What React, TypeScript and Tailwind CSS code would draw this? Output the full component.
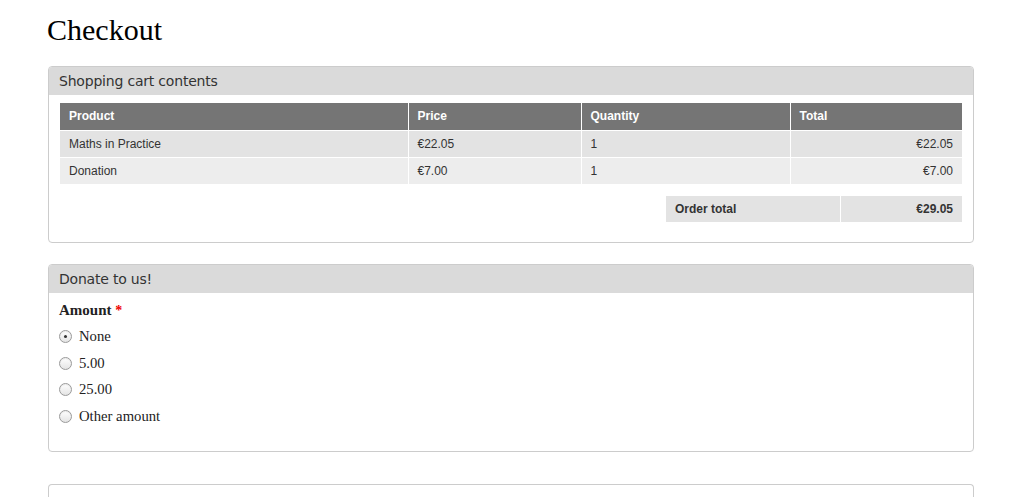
import React from "react";

const rows = [
  { product: "Maths in Practice", price: "€22.05", qty: "1", total: "€22.05" },
  { product: "Donation", price: "€7.00", qty: "1", total: "€7.00" },
];

const amounts = ["None", "5.00", "25.00", "Other amount"];

function Radio({ checked }: { checked?: boolean }) {
  return (
    <span className="relative inline-block w-[13px] h-[13px] rounded-full border border-[#9a9a9a] bg-gradient-to-b from-[#ffffff] to-[#e4e4e4] shadow-[inset_0_1px_1px_rgba(0,0,0,0.08)]">
      {checked && (
        <span className="absolute left-[4px] top-[4px] w-[3px] h-[3px] rounded-full bg-[#333]" />
      )}
    </span>
  );
}

function Panel({ title, children }: { title: string; children?: React.ReactNode }) {
  return (
    <section className="border border-[#cccccc] rounded-[4px] overflow-hidden bg-white">
      <div className="h-[28px] bg-[#dadada] px-[10px] flex items-center text-[14px] text-[#333] font-['DejaVu_Sans',sans-serif] tracking-[-0.2px]">
        {title}
      </div>
      {children}
    </section>
  );
}

export default function App() {
  return (
    <div className="h-[497px] overflow-hidden bg-white pl-[48px] pr-[42px] pt-[12px] font-['Liberation_Sans',Arial,sans-serif]">
      <h1 className="font-['Liberation_Serif',Georgia,serif] text-[30px] leading-[36px] text-black ml-[-1px] mb-[18px]">
        Checkout
      </h1>

      <Panel title="Shopping cart contents">
        <div className="px-[11px] pt-[8px] pb-[20px]">
          <table className="w-full border-collapse text-[12px] text-[#333]">
            <colgroup>
              <col className="w-[348px]" />
              <col className="w-[173px]" />
              <col className="w-[209px]" />
              <col />
            </colgroup>
            <thead>
              <tr className="bg-[#757575] text-white font-bold h-[27px]">
                <th className="text-left font-bold px-[9px] border-r border-white">Product</th>
                <th className="text-left font-bold px-[9px] border-r border-white">Price</th>
                <th className="text-left font-bold px-[9px] border-r border-white">Quantity</th>
                <th className="text-left font-bold px-[9px]">Total</th>
              </tr>
            </thead>
            <tbody>
              {rows.map((r, i) => (
                <tr
                  key={r.product}
                  className={`h-[27px] border-t border-white ${i === 0 ? "bg-[#e3e3e3]" : "bg-[#ededed]"}`}
                >
                  <td className="px-[9px] border-r border-white">{r.product}</td>
                  <td className="px-[9px] border-r border-white">{r.price}</td>
                  <td className="px-[9px] border-r border-white">{r.qty}</td>
                  <td className="px-[9px] text-right">{r.total}</td>
                </tr>
              ))}
            </tbody>
          </table>

          <div className="flex justify-end mt-[12px]">
            <div className="flex h-[26px] text-[12px] font-bold text-[#333]">
              <div className="w-[175px] bg-[#e3e3e3] px-[9px] flex items-center border-r border-white">
                Order total
              </div>
              <div className="w-[121px] bg-[#e3e3e3] px-[9px] flex items-center justify-end">
                €29.05
              </div>
            </div>
          </div>
        </div>
      </Panel>

      <div className="h-[21px]" />

      <Panel title="Donate to us!">
        <div className="px-[10px] pt-[9px] pb-[26px] font-['Liberation_Serif',Georgia,serif] text-[#222]">
          <div className="text-[15px] font-bold leading-[16px] mb-[9px]">
            Amount <span className="text-[#e00] text-[14px]">*</span>
          </div>
          <div className="flex flex-col gap-[9.7px]">
            {amounts.map((a, i) => (
              <label key={a} className="flex items-center gap-[7px] h-[17px] text-[14.7px] leading-[17px]">
                <Radio checked={i === 0} />
                <span>{a}</span>
              </label>
            ))}
          </div>
        </div>
      </Panel>

      <div className="h-[32px]" />

      <section className="border border-[#cccccc] border-b-0 rounded-t-[4px] h-[13px]" />
    </div>
  );
}
